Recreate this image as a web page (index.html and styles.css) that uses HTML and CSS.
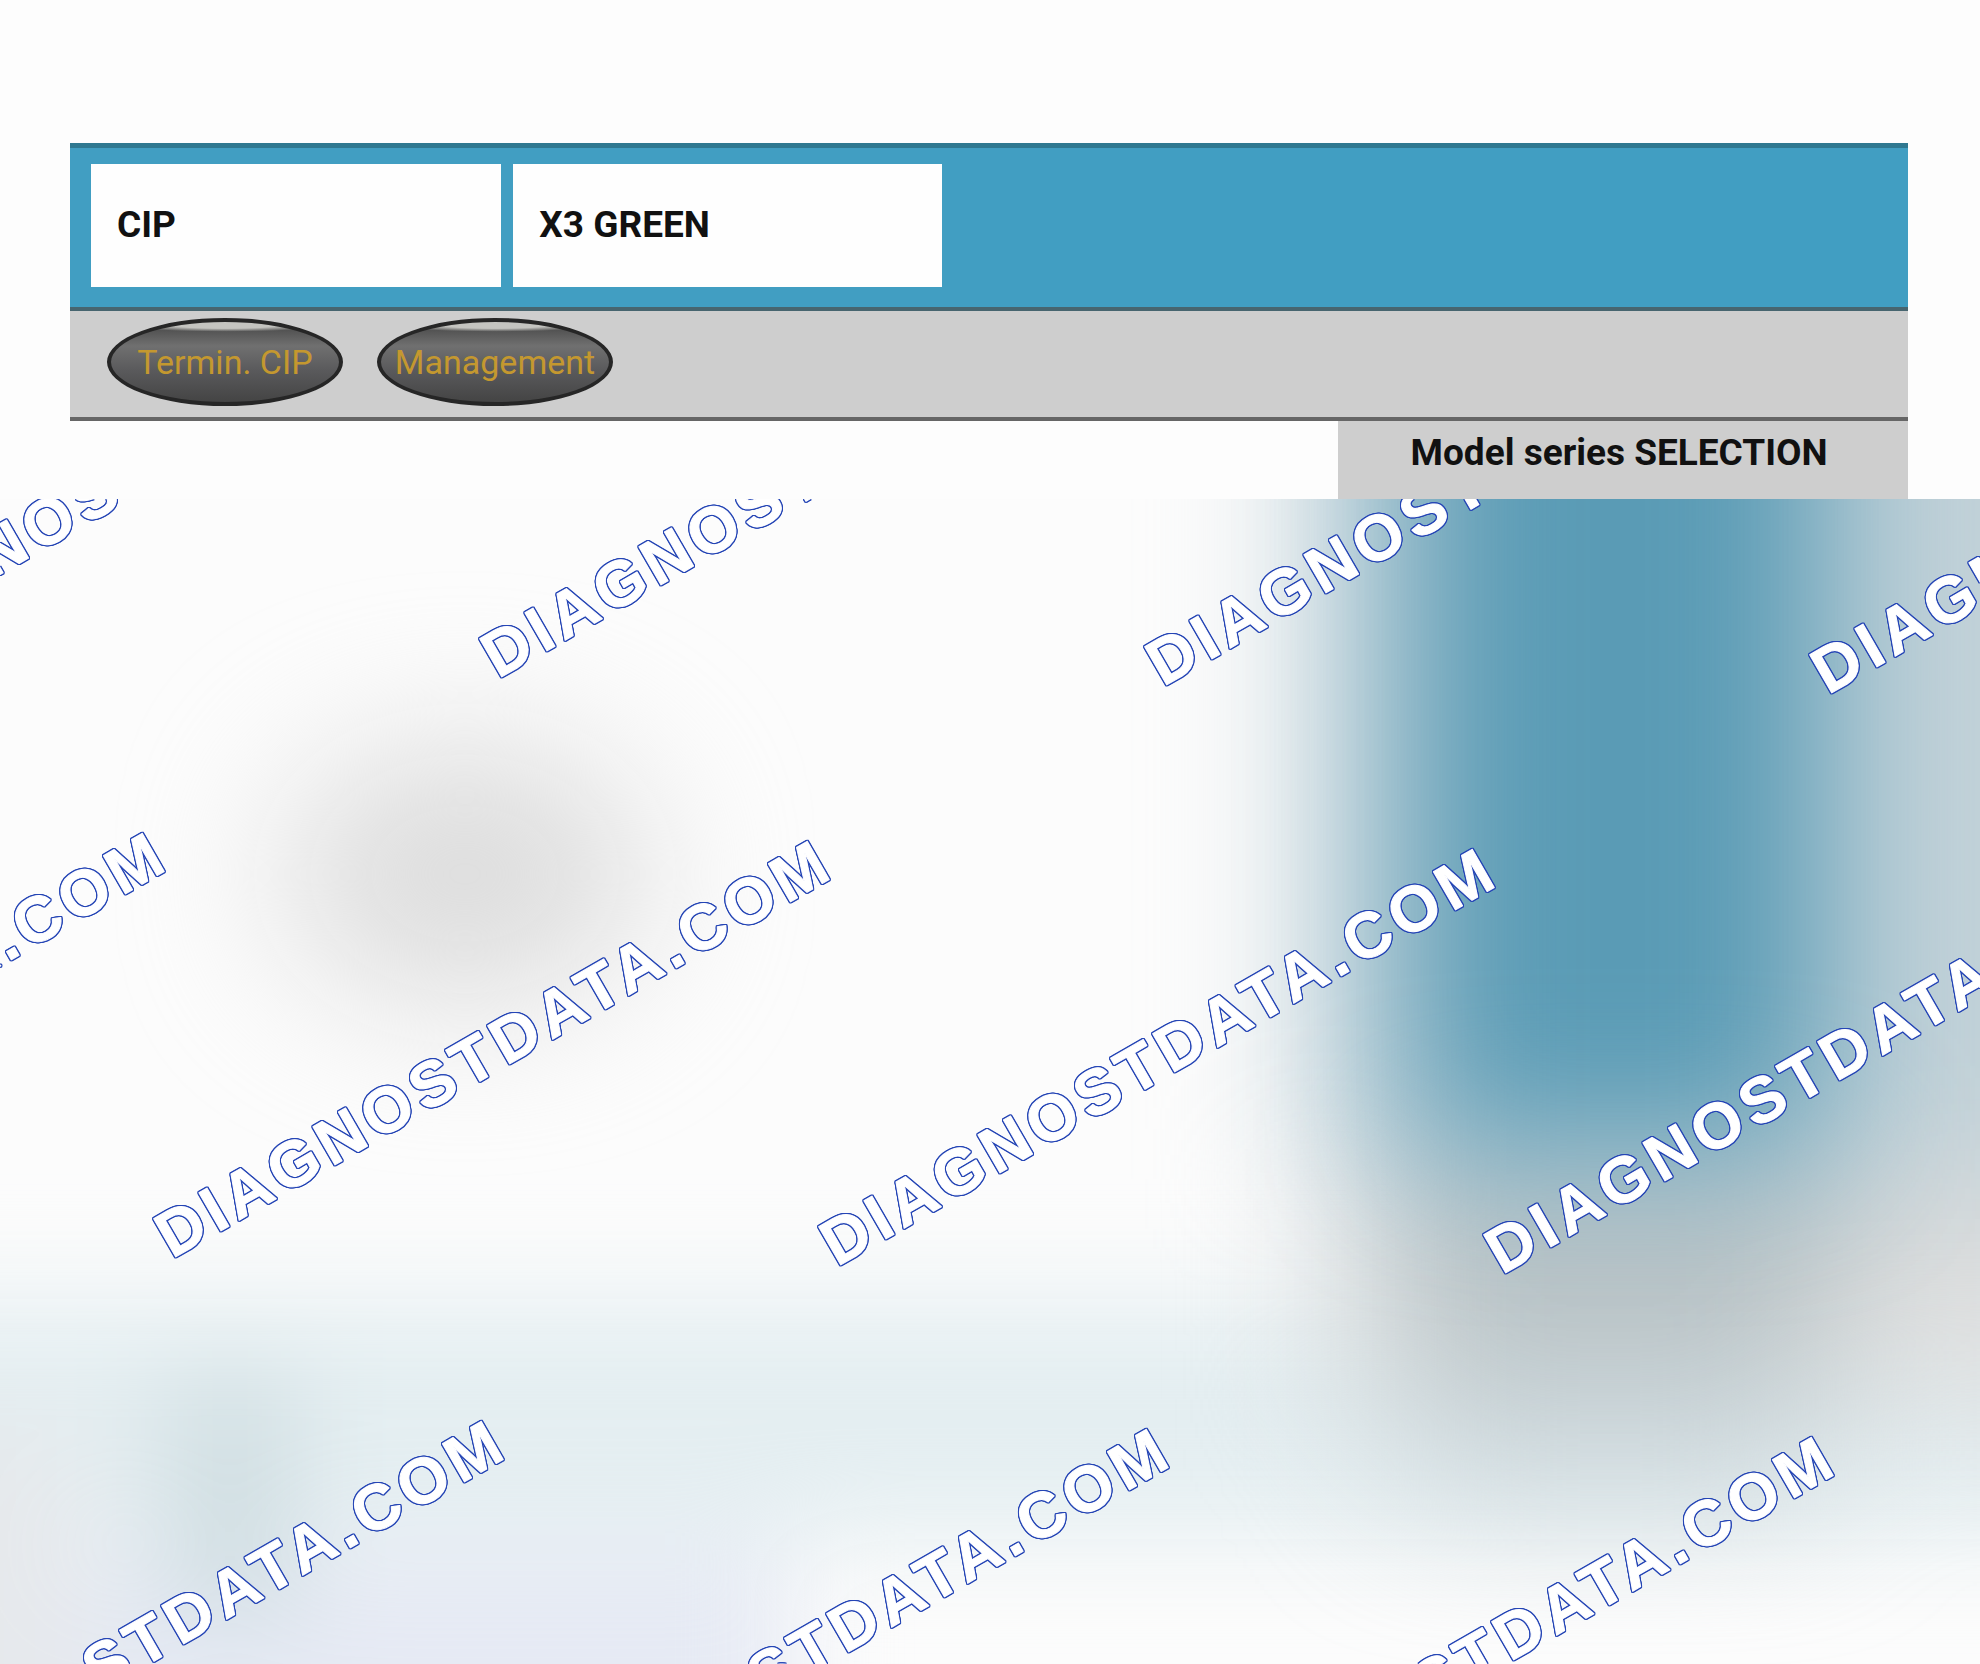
FILE: index.html
```html
<!DOCTYPE html>
<html lang="en">
<head>
    <meta charset="UTF-8">
    <meta name="viewport" content="width=device-width, initial-scale=1.0">
    <title>CIP - Model series selection</title>
    <link rel="stylesheet" href="styles.css">
</head>
<body>

<div class="screen">
    <header class="titlebar">
        <div class="field">CIP</div>
        <div class="field">X3 GREEN</div>
    </header>

    <nav class="toolbar">
        <button type="button" class="oval">Termin. CIP</button>
        <button type="button" class="oval">Management</button>
    </nav>

    <div class="content">
        <h1 class="panel-title">Model series SELECTION</h1>
    </div>
</div>

<!-- Locked preview -->
<section class="preview">
    <svg class="haze" viewBox="0 0 1980 1165" preserveAspectRatio="none" aria-hidden="true">
        <defs>
            <filter id="soft" filterUnits="userSpaceOnUse" x="-400" y="-400" width="2800" height="2000" color-interpolation-filters="sRGB">
                <feGaussianBlur stdDeviation="75"/>
            </filter>
            <filter id="softer" filterUnits="userSpaceOnUse" x="-400" y="-400" width="2800" height="2000" color-interpolation-filters="sRGB">
                <feGaussianBlur stdDeviation="52"/>
            </filter>
        </defs>
        <g filter="url(#softer)">
            <rect x="-300" y="800" width="2600" height="240" fill="#e4eef1"/>
            <rect x="-300" y="1050" width="1090" height="500" fill="#e6eaf4"/>
            <rect x="-300" y="930" width="380" height="600" fill="#e6e9ec"/>
            <rect x="170" y="880" width="120" height="240" fill="#cfdde1"/>
        </g>
        <ellipse cx="465" cy="375" rx="185" ry="130" fill="#dcdcdc" filter="url(#soft)"/>
        <g filter="url(#soft)">
            <rect x="1340" y="600" width="1000" height="300" fill="#dcdddd"/>
            <rect x="1400" y="860" width="420" height="130" fill="#ccd6da"/>
            <rect x="1400" y="600" width="430" height="260" fill="#b6c0c3"/>
            <rect x="1310" y="-300" width="1000" height="980" fill="#c2d2d9"/>
        </g>
        <rect x="1410" y="-300" width="415" height="950" fill="#5a9bb5" filter="url(#soft)"/>
    </svg>

    <svg class="watermark">
        <text transform="translate(-167 172) rotate(-30)">DIAGNOSTDATA.COM</text>
        <text transform="translate(498 180) rotate(-30)">DIAGNOSTDATA.COM</text>
        <text transform="translate(1163 188) rotate(-30)">DIAGNOSTDATA.COM</text>
        <text transform="translate(1828 196) rotate(-30)">DIAGNOSTDATA.COM</text>
        <text transform="translate(-493 752) rotate(-30)">DIAGNOSTDATA.COM</text>
        <text transform="translate(172 760) rotate(-30)">DIAGNOSTDATA.COM</text>
        <text transform="translate(837 768) rotate(-30)">DIAGNOSTDATA.COM</text>
        <text transform="translate(1502 776) rotate(-30)">DIAGNOSTDATA.COM</text>
        <text transform="translate(-154 1340) rotate(-30)">DIAGNOSTDATA.COM</text>
        <text transform="translate(511 1348) rotate(-30)">DIAGNOSTDATA.COM</text>
        <text transform="translate(1176 1356) rotate(-30)">DIAGNOSTDATA.COM</text>
    </svg>
</section>

</body>
</html>
```

FILE: styles.css
```css
* {
    box-sizing: border-box;
}

body {
    display: flex;
    flex-direction: column;
    min-height: 100vh;
    margin: 0;
    background-color: #fdfdfd;
    color: #111;
    font-family: Roboto, "Liberation Sans", sans-serif;
}

.screen {
    padding: 143px 72px 0 70px;
}

.titlebar {
    display: grid;
    grid-template-columns: 22fr 23fr 50fr;
    gap: 12px;
    padding: 16px 21px 20px;
    background-color: #419ec2;
    border-top: 5px solid #2f7890;
    border-bottom: 4px solid #47656f;
}

.field {
    padding: 0 26px 2px;
    background-color: #fefefe;
    font-size: 37px;
    font-weight: bold;
    line-height: 121px;
}

.toolbar {
    display: flex;
    gap: 34px;
    padding: 7px 37px 11px;
    background-color: #cecece;
    border-bottom: 4px solid #666;
}

.oval {
    width: 236px;
    height: 88px;
    padding: 0;
    border: 4px solid #262626;
    border-radius: 50%;
    background: radial-gradient(ellipse 44% 8% at 50% 4%, #c4c4c0 50%, transparent 100%), linear-gradient(#444, #707070 30%, #5a5a5c 60%, #444);
    color: #c4982f;
    font-family: inherit;
    font-size: 34px;
    line-height: 40px;
    white-space: nowrap;
    cursor: pointer;
}

.content {
    display: flex;
    justify-content: flex-end;
}

.panel-title {
    width: 31%;
    height: 78px;
    margin: 0;
    padding-right: 8px;
    background-color: #cecece;
    font-size: 37px;
    line-height: 64px;
    text-align: center;
    white-space: nowrap;
}

.preview {
    position: relative;
    flex: 1;
    overflow: hidden;
    background-color: #fcfcfc;
}

.haze, .watermark {
    position: absolute;
    top: 0;
    left: 0;
    width: 100%;
    height: 100%;
}

/* thin blue line around the white letters */
.watermark {
    filter: drop-shadow(1px 0 0 #2545b5) drop-shadow(-1px 0 0 #2545b5) drop-shadow(0 1px 0 #2545b5) drop-shadow(0 -1px 0 #2545b5);
}

.watermark text {
    fill: #fff;
    stroke: #fff;
    stroke-width: 1px;
    stroke-linejoin: round;
    font-family: "Liberation Sans", Arial, sans-serif;
    font-size: 64px;
    font-weight: bold;
    letter-spacing: 6px;
}
```
